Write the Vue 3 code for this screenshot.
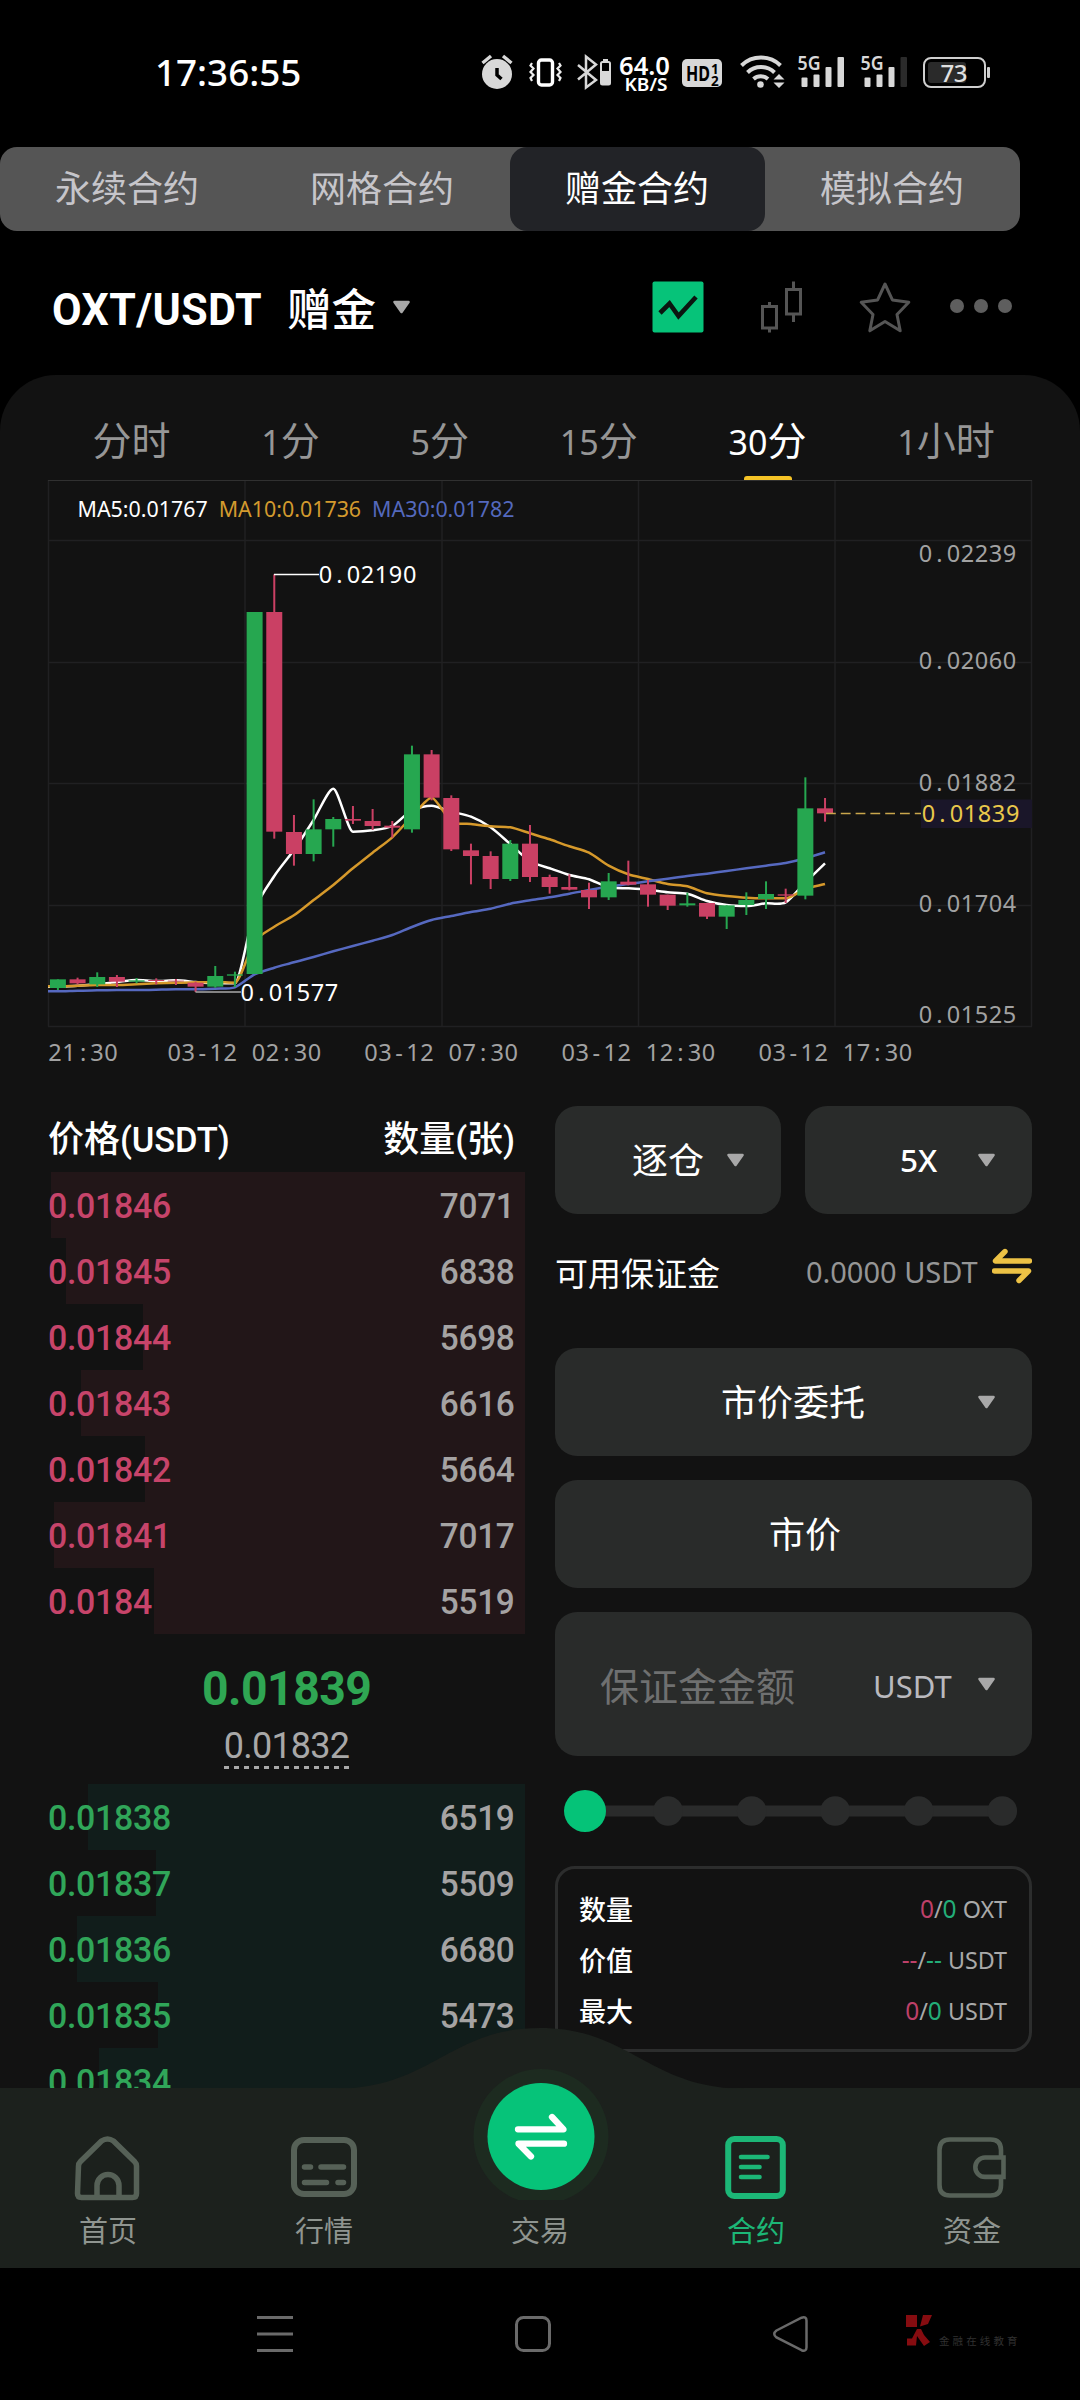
<script setup>
const segments = ['永续合约', '网格合约', '赠金合约', '模拟合约']
const periods = [
  { num: '', unit: '分时' },
  { num: '1', unit: '分' },
  { num: '5', unit: '分' },
  { num: '15', unit: '分' },
  { num: '30', unit: '分', active: true },
  { num: '1', unit: '小时' },
]

// Chart geometry: the svg starts at page y = 480; series are stored in thirds of a pixel from y = 720.
const toY = (v) => 240 + v / 3
const toX = (i) => 57.9 + 19.67 * i

// [up, bodyTop, bodyBottom, wickTop, wickBottom]
const raw = [
  [1, 778, 804, 778, 810], [0, 778, 790, 773, 793], [1, 771, 793, 757, 801], [0, 771, 785, 765, 801],
  [1, 781, 785, 774, 790], [0, 780, 783, 775, 793], [0, 782, 784, 777, 795], [0, 788, 800, 785, 816],
  [1, 768, 800, 738, 803], [1, 763, 767, 755, 801], [1, -324, 762, -324, 762], [0, -324, 335, -437, 356],
  [0, 336, 402, 285, 437], [1, 328, 402, 238, 424], [1, 297, 328, 291, 380], [0, 297, 302, 258, 312],
  [0, 303, 318, 267, 330], [0, 317, 323, 303, 353], [1, 103, 328, 77, 338], [0, 103, 233, 90, 241],
  [0, 234, 388, 226, 393], [0, 391, 408, 371, 493], [0, 408, 477, 394, 507], [1, 371, 477, 360, 483],
  [0, 371, 471, 315, 486], [0, 471, 501, 464, 521], [0, 501, 509, 463, 511], [0, 510, 532, 488, 567],
  [1, 484, 532, 459, 540], [0, 485, 494, 422, 496], [0, 493, 524, 480, 560], [0, 524, 557, 524, 570],
  [1, 550, 556, 518, 560], [0, 549, 590, 549, 597], [1, 556, 590, 556, 627], [1, 540, 555, 517, 585],
  [1, 522, 537, 484, 567], [0, 523, 527, 506, 549], [1, 265, 527, 172, 538], [0, 265, 280, 234, 305],
]
const candles = raw.map(([up, t, b, wt, wb], i) => ({
  x: toX(i), y: toY(t), h: (b - t) / 3, w1: toY(wt), w2: toY(wb), color: up ? '#26a750' : '#ca4064',
}))

const ma5 = [800, 797, 793, 786, 780, 783, 781, 786, 790, 790, 570, 468, 390, 300, 206, 335, 331, 318, 270, 257,
  275, 290, 322, 372, 424, 445, 465, 478, 502, 505, 509, 517, 521, 543, 555, 558, 550, 547, 487, 430]
const ma10 = [799, 797, 795, 795, 793, 790, 788, 787, 786, 788, 665, 620, 586, 540, 495, 445, 398, 352, 290, 233,
  305, 312, 319, 322, 340, 358, 379, 398, 437, 463, 477, 492, 499, 520, 528, 533, 535, 535, 507, 492]
const ma30 = [814, 812, 811, 810, 810, 809, 808, 808, 806, 802, 763, 743, 727, 711, 694, 678, 662, 645, 621, 600,
  588, 576, 566, 551, 541, 532, 521, 510, 500, 492, 484, 476, 468, 461, 453, 445, 437, 429, 415, 397]

function smooth(values) {
  const p = [[48, toY(values[0])], ...values.map((v, i) => [toX(i), toY(v)])]
  const slope = p.map((_, i) => {
    if (i === 0 || i === p.length - 1) return null
    const a = (p[i][1] - p[i - 1][1]) / (p[i][0] - p[i - 1][0])
    const b = (p[i + 1][1] - p[i][1]) / (p[i + 1][0] - p[i][0])
    return a * b <= 0 ? 0 : (a + b) / 2
  })
  let d = `M${p[0][0]} ${p[0][1]}`
  for (let i = 1; i < p.length; i++) {
    const [x0, y0] = p[i - 1]
    const [x1, y1] = p[i]
    const lin = (y1 - y0) / (x1 - x0)
    const k = (x1 - x0) * 0.25
    const m0 = slope[i - 1] ?? lin
    const m1 = slope[i] ?? lin
    d += `C${(x0 + k).toFixed(1)} ${(y0 + k * m0).toFixed(1)} ${(x1 - k).toFixed(1)} ${(y1 - k * m1).toFixed(1)} ${x1.toFixed(1)} ${y1.toFixed(1)}`
  }
  return d
}
const lines = [
  { d: smooth(ma5), color: '#ffffff' },
  { d: smooth(ma10), color: '#d6992b' },
  { d: smooth(ma30), color: '#5669c0' },
]

// Fixed-pitch labels: every character is centred in its own 14px cell.
const cells = (text, x) => [...text].map((_, i) => (x + i * 14.03).toFixed(1)).join(' ')
const labels = [
  { t: '0.02239', x: 925.4, y: 82, c: '#a2a2a2' },
  { t: '0.02060', x: 925.4, y: 189.3, c: '#a2a2a2' },
  { t: '0.01882', x: 925.4, y: 311, c: '#a2a2a2' },
  { t: '0.01704', x: 925.4, y: 431.7, c: '#a2a2a2' },
  { t: '0.01525', x: 925.4, y: 543, c: '#a2a2a2' },
  { t: '0.01839', x: 928.5, y: 342, c: '#e9c84b' },
  { t: '0.02190', x: 325.5, y: 103, c: '#ffffff' },
  { t: '0.01577', x: 247.3, y: 521, c: '#ffffff' },
  { t: '21:30', x: 55, y: 580.7, c: '#a2a2a2' },
  { t: '03-12 02:30', x: 174.2, y: 580.7, c: '#a2a2a2' },
  { t: '03-12 07:30', x: 371, y: 580.7, c: '#a2a2a2' },
  { t: '03-12 12:30', x: 568.2, y: 580.7, c: '#a2a2a2' },
  { t: '03-12 17:30', x: 765.2, y: 580.7, c: '#a2a2a2' },
]
const gridX = [48.5, 245, 442, 638.5, 835, 1031.5]
const gridY = [60.5, 182.5, 303.5, 425.5, 546.5]

const asks = [
  ['0.01846', '7071', 474], ['0.01845', '6838', 459], ['0.01844', '5698', 382], ['0.01843', '6616', 444],
  ['0.01842', '5664', 380], ['0.01841', '7017', 471], ['0.0184', '5519', 371],
]
const bids = [
  ['0.01838', '6519', 437], ['0.01837', '5509', 369], ['0.01836', '6680', 448], ['0.01835', '5473', 367],
  ['0.01834', '', 426],
]
const stops = [668, 751.7, 835.2, 918.7, 1002.3]
const summary = [
  { name: '数量', a: '0', b: '0', unit: 'OXT' },
  { name: '价值', a: '--', b: '--', unit: 'USDT' },
  { name: '最大', a: '0', b: '0', unit: 'USDT' },
]
</script>

<template>
  <div class="screen">
    <header class="status">
      <span class="clock">17:36:55</span>
      <svg class="status-icons" width="520" height="60" viewBox="476 44 520 60">
        <g fill="#d8d8d8">
          <circle cx="497" cy="74" r="15" />
          <path d="M482.500 63l8.500-7M511.500 63l-8.500-7" stroke="#d8d8d8" stroke-width="3.400" />
          <path d="M497 68v7l4.500 4" stroke="#000" stroke-width="3.500" fill="none" />
        </g>
        <rect x="538.500" y="60" width="14" height="25" rx="3" fill="none" stroke="#fff" stroke-width="3.400" />
        <path d="M532 63l-1.500 2.500 3 3-3 3.500 3 3-3 3 1.500 3M559 63l1.500 2.500-3 3 3 3.500-3 3 3 3-1.500 3" fill="none" stroke="#eee" stroke-width="2.200" />
        <path d="M578 65l18 15-10 7.500v-31l10 8-18 15" fill="none" stroke="#d8d8d8" stroke-width="2.500" />
        <path d="M603 59h5v2h-5z" fill="#d8d8d8" />
        <rect x="601" y="62" width="9" height="22.500" rx="1.500" fill="none" stroke="#d8d8d8" stroke-width="2" />
        <rect x="601" y="71" width="9" height="13" fill="#d8d8d8" />
        <text x="619" y="74.500" font-size="24.500" font-weight="600" fill="#fff" textLength="51" lengthAdjust="spacingAndGlyphs">64.0</text>
        <text x="624.500" y="91" font-size="18" font-weight="600" fill="#fff" textLength="43" lengthAdjust="spacingAndGlyphs">KB/S</text>
        <rect x="682" y="59" width="40" height="28" rx="5" fill="#d8d8d8" />
        <text x="686" y="81" font-size="22" font-weight="700" fill="#000" textLength="24" lengthAdjust="spacingAndGlyphs">HD</text>
        <text x="711" y="73.500" font-size="13.500" font-weight="700" fill="#000">1</text>
        <text x="711" y="85.500" font-size="13.500" font-weight="700" fill="#000">2</text>
        <g fill="none" stroke="#d8d8d8" stroke-width="4">
          <path d="M741.500 65.500a28 28 0 0 1 39 0" />
          <path d="M747.500 72.500a19.500 19.500 0 0 1 27 0" />
          <path d="M753.500 79a11 11 0 0 1 14.500 0" />
        </g>
        <circle cx="760.500" cy="84.500" r="3.300" fill="#d8d8d8" />
        <path d="M773.500 79.500l5.500-5.500 5.500 5.500zM773.500 82.500l5.500 5.500 5.500-5.500z" fill="#d8d8d8" />
        <g v-for="(dx, n) in [0, 63]" :key="dx" :transform="`translate(${dx} 0)`" fill="#d8d8d8">
          <text x="797.500" y="70" font-size="19.500" font-weight="600" textLength="23" lengthAdjust="spacingAndGlyphs">5G</text>
          <rect x="801.500" y="77.500" width="6" height="9.500" rx="1" />
          <rect x="813.500" y="74.500" width="6" height="12.500" rx="1" />
          <rect x="825.500" y="67" width="6" height="20" rx="1" />
          <rect x="837.500" y="57" width="6.500" height="30" rx="1" :fill="n ? '#2b2b2b' : '#d8d8d8'" />
        </g>
        <rect x="924" y="58" width="61" height="29" rx="7" fill="none" stroke="#cfcfcf" stroke-width="2" />
        <rect x="928" y="62" width="38" height="21" rx="3" fill="#2a2a2a" />
        <rect x="987" y="67" width="3" height="11" rx="1" fill="#cfcfcf" />
        <text x="940.500" y="81.500" font-size="24" font-weight="500" fill="#e0e0e0" textLength="27">73</text>
      </svg>
    </header>

    <nav class="segments">
      <span v-for="(s, i) in segments" :key="s" :class="['segment', { on: i === 2 }]">{{ s }}</span>
    </nav>

    <div class="title-row">
      <span class="pair">OXT/USDT</span>
      <span class="gift">赠金</span>
      <svg class="caret" width="19" height="14" viewBox="0 0 19 14"><path d="M2.500 2h14L9.500 12z" /></svg>
      <svg class="tools" width="370" height="60" viewBox="648 277 370 60">
        <rect x="652.500" y="281.500" width="51" height="51" rx="2" fill="#06c379" />
        <path d="M660 313l9.500-9.500 9 12.500 17.500-19" fill="none" stroke="#0b1510" stroke-width="4.600" />
        <g fill="none" stroke="#555" stroke-width="3">
          <path d="M762.500 306.500h14v21.500h-14zM769.500 302v4M769.500 328v4.500M786.500 289.500h14v24.500h-14zM793.500 281.500v8M793.500 314v8" />
          <path d="M885 284l7.400 15.900 16.400 2.400-11.800 12.200 3.200 16.300-15.200-9.300-15.200 9.300 3.200-16.300-11.800-12.200 16.400-2.400z" stroke-linejoin="round" />
        </g>
        <g fill="#5e5e5e">
          <circle cx="957" cy="306" r="7" /><circle cx="981" cy="306" r="7" /><circle cx="1005" cy="306" r="7" />
        </g>
      </svg>
    </div>

    <main class="panel">
      <div class="periods">
        <span v-for="p in periods" :key="p.num + p.unit" :class="['period', { on: p.active }]"><i v-if="p.num">{{ p.num }}</i>{{ p.unit }}</span>
      </div>

      <div class="chart">
        <svg width="1080" height="600" viewBox="0 0 1080 600">
          <g stroke="#202022" stroke-width="1.500">
            <line v-for="x in gridX" :key="x" :x1="x" :x2="x" y1="0" y2="546.500" />
            <line v-for="y in gridY" :key="y" x1="48" x2="1032" :y1="y" :y2="y" />
          </g>
          <line x1="48" x2="1032" y1="0.500" y2="0.500" stroke="#303030" />
          <path v-for="l in lines" :key="l.color" :d="l.d" fill="none" :stroke="l.color" stroke-width="2.500" />
          <g v-for="c in candles" :key="c.x" :fill="c.color">
            <rect :x="c.x - 1" :y="c.w1" width="2" :height="c.w2 - c.w1" />
            <rect :x="c.x - 8" :y="c.y" width="16" :height="c.h" />
          </g>
          <line x1="274" x2="319" y1="94.500" y2="94.500" stroke="#fff" stroke-width="1.300" />
          <line x1="195.500" x2="241" y1="512" y2="512" stroke="#aaa" stroke-width="1.500" />
          <line x1="826" x2="922" y1="333.500" y2="333.500" stroke="#c9a64c" stroke-width="1.400" stroke-dasharray="9.800 5" />
          <rect x="921" y="319.500" width="111" height="28.500" fill="#1a1629" />
          <text v-for="l in labels" :key="l.t" class="mono" :x="cells(l.t, l.x)" :y="l.y" :fill="l.c">{{ l.t }}</text>
        </svg>
        <div class="legend">
          <span class="m5">MA5:0.01767</span><span class="m10">MA10:0.01736</span><span class="m30">MA30:0.01782</span>
        </div>
      </div>

      <div class="trade">
        <section class="book">
          <div class="book-head">
            <span>价格<b>(USDT)</b></span><span>数量<b>(</b>张<b>)</b></span>
          </div>
          <div v-for="r in asks" :key="r[0]" class="row ask">
            <span class="depth" :style="{ width: r[2] + 'px' }"></span>
            <span class="price">{{ r[0] }}</span><span class="qty">{{ r[1] }}</span>
          </div>
          <div class="mid">
            <span class="last">0.01839</span>
            <span class="mark">0.01832</span>
          </div>
          <div v-for="r in bids" :key="r[0]" class="row bid">
            <span class="depth" :style="{ width: r[2] + 'px' }"></span>
            <span class="price">{{ r[0] }}</span><span class="qty">{{ r[1] }}</span>
          </div>
        </section>

        <section class="order">
          <div class="pick-row">
            <div class="box mode"><span>逐仓</span><svg class="caret" width="19" height="14" viewBox="0 0 19 14"><path d="M2.500 2h14L9.500 12z" /></svg></div>
            <div class="box lever"><span class="x5">5X</span><svg class="caret" width="19" height="14" viewBox="0 0 19 14"><path d="M2.500 2h14L9.500 12z" /></svg></div>
          </div>
          <div class="margin-row">
            <span class="margin-name">可用保证金</span>
            <span class="margin-val">0.0000 USDT</span>
            <svg width="40" height="36" viewBox="0 0 40 36" fill="none" stroke="#edc245" stroke-width="5.400" stroke-linecap="round" stroke-linejoin="round">
              <path d="M13 3.500L3.500 13h34M27 32.500l9.500-9.500h-34" />
            </svg>
          </div>
          <div class="box type"><span>市价委托</span><svg class="caret" width="19" height="14" viewBox="0 0 19 14"><path d="M2.500 2h14L9.500 12z" /></svg></div>
          <div class="box market"><span>市价</span></div>
          <div class="box amount">
            <span class="hint">保证金金额</span><span class="unit">USDT</span>
            <svg class="caret" width="19" height="14" viewBox="0 0 19 14"><path d="M2.500 2h14L9.500 12z" /></svg>
          </div>
          <svg class="slider" width="477" height="50" viewBox="555 1786 477 50">
            <rect x="585" y="1805.500" width="417" height="11" fill="#2a2b2b" />
            <circle v-for="x in stops" :key="x" :cx="x" cy="1811" r="14.800" fill="#2a2b2b" />
            <circle cx="585" cy="1811" r="21" fill="#05c378" />
          </svg>
          <div class="summary">
            <div v-for="s in summary" :key="s.name" class="sum-row">
              <span class="sum-name">{{ s.name }}</span>
              <span class="sum-val"><em class="r">{{ s.a }}</em>/<em class="g">{{ s.b }}</em> {{ s.unit }}</span>
            </div>
          </div>
        </section>
      </div>
    </main>

    <footer class="tabbar">
      <svg class="hump" width="1080" height="180" viewBox="0 2020 1080 180">
        <path d="M335 2089C432 2088 450 2028 540 2028S648 2088 745 2089z" fill="#1c211d" />
        <circle cx="541" cy="2136.500" r="67.500" fill="#1d2b20" />
        <circle cx="541" cy="2136.500" r="53.500" fill="#06c379" />
        <path d="M518 2129.300h45.500L552 2117M564 2143.700h-45.500L531 2156.500" fill="none" stroke="#fff" stroke-width="6.300" stroke-linecap="round" stroke-linejoin="round" />
      </svg>
      <div class="tab">
        <svg width="72" height="68" viewBox="72 2134 72 68" fill="none" stroke="#566157" stroke-width="5.500" stroke-linejoin="round">
          <path d="M78.500 2166q0-2.500 2-4.500l21-20.500q6-4 12 0l21 20.500q2 2 2 4.500v27.500q0 4-4 4h-51q-4 0-4-4zM97 2197v-11.500a11 11 0 0 1 22 0v11.500" />
        </svg>
        <span>首页</span>
      </div>
      <div class="tab">
        <svg width="72" height="68" viewBox="289 2134 72 68" fill="none" stroke="#566157" stroke-width="6">
          <rect x="295" y="2140" width="60" height="54" rx="10" />
          <path d="M305.500 2167h6M322 2167h22.500M305.500 2182.500h22M339 2182.500h5.500" stroke-width="5.500" stroke-linecap="round" />
        </svg>
        <span>行情</span>
      </div>
      <div class="tab"><svg width="72" height="68"></svg><span>交易</span></div>
      <div class="tab on">
        <svg width="72" height="68" viewBox="720 2134 72 68" fill="none" stroke="#1cb777" stroke-width="6">
          <rect x="728.200" y="2139" width="54.600" height="57" rx="6" />
          <path d="M741 2157h26.500M741 2167h18.500M741 2177h18.500" stroke-width="4.600" stroke-linecap="round" />
        </svg>
        <span>合约</span>
      </div>
      <div class="tab">
        <svg width="72" height="68" viewBox="936 2134 72 68" fill="none" stroke="#566157" stroke-width="4.600">
          <path d="M1001 2157v-7q0-10.500-10.500-10.500h-40.500q-10.500 0-10.500 10.500v35q0 10.500 10.500 10.500h40.500q10.500 0 10.500-10.500v-7M1003.500 2157.500h-18.500a9.700 9.700 0 0 0 0 19.400h18.500z" />
        </svg>
        <span>资金</span>
      </div>
    </footer>

    <div class="sysbar">
      <svg width="1080" height="132" viewBox="0 2268 1080 132">
        <g fill="none" stroke="#6a6a6a" stroke-width="3">
          <path d="M257 2317.500h36M257 2334h36M257 2350.500h36" />
          <rect x="516.500" y="2317.500" width="33" height="33" rx="7" />
          <path d="M776.500 2330.500l25-12.800q5-1.700 5 3v26.500q0 4.700-5 3l-25-12.800q-4.500-3.500 0-6.900z" stroke-width="2.500" />
        </g>
        <path d="M906 2315h11v12h-11zM923 2315h9l-4 9-8 2.500zM917 2329h4l3 6 6 7-6 4-7-10-1 9.500h-9v-7h5z" fill="#860c10" />
        <text x="939" y="2344.500" class="stamp">金融在线教育</text>
      </svg>
    </div>
  </div>
</template>

<style>
body { background: #000; }
</style>

<style scoped>
.screen {
  width: 1080px; height: 2400px; overflow: hidden; background: #000; color: #fff;
  display: flex; flex-direction: column;
  font-family: "Noto Sans", "Noto Sans CJK SC", sans-serif;
}
.status { height: 147px; flex: none; display: flex; align-items: flex-start; }
.clock { margin-left: 155px; width: 321px; flex: none; font-size: 36.800px; font-weight: 500; line-height: 50px; margin-top: 47px; }
.status-icons { margin-top: 44px; }
.segments { width: 1020px; height: 84px; flex: none; display: flex; background: #555; border-radius: 17px; overflow: hidden; }
.segment { flex: 1; text-align: center; line-height: 84px; font-size: 36px; color: #c6c5ca; text-indent: -1px; }
.segment.on { background: #222327; color: #fff; border-radius: 17px; }
.title-row { height: 144px; flex: none; display: flex; align-items: flex-start; padding: 46px 0 0 52px; box-sizing: border-box; }
.pair { width: 236px; font: 700 44.500px/66px Roboto, sans-serif; letter-spacing: 0.400px; white-space: nowrap; transform: scaleX(0.965); transform-origin: 0 50%; }
.gift { font-size: 44.500px; line-height: 64px; font-weight: 500; width: 104px; margin-left: -1px; margin-right: 1px; }
.caret { flex: none; fill: #a8a8a8; stroke: #a8a8a8; stroke-width: 2.600; stroke-linejoin: round; }
.title-row .caret { margin-top: 23px; }
.tools { margin-left: 237px; }

.panel { height: 1713px; flex: none; background: #121212; border-radius: 56px 56px 0 0; overflow: hidden; }
.periods { display: flex; gap: 90.800px; height: 105px; padding-left: 92.500px; }
.period { font-size: 39px; line-height: 129px; color: #969696; position: relative; white-space: nowrap; height: 105px; }
.period i { font-style: normal; font-size: 34px; }
.period.on { color: #fff; }
.period.on::after { content: ''; position: absolute; left: 15px; bottom: 0; width: 48px; height: 4px; background: #f5c326; border-radius: 3px 3px 0 0; }
.chart { position: relative; height: 600px; }
.chart svg { display: block; }
.mono { font-size: 23.500px; text-anchor: middle; }
.legend { position: absolute; left: 77.500px; top: 14px; display: flex; gap: 11px; font-size: 21.400px; line-height: 30px; }
.m10 { color: #d39a2e; }
.m30 { color: #5469bd; }

.trade { display: flex; }
.book { width: 525px; flex: none; }
.book-head { height: 91.500px; box-sizing: border-box; padding: 27px 10px 0 48px; display: flex; justify-content: space-between; font-size: 36px; font-weight: 500; line-height: 63px; }
.book-head b { font: 500 34.500px/40px Roboto, sans-serif; letter-spacing: -0.100px; }
.row { height: 66px; position: relative; display: flex; justify-content: space-between; padding: 0 10px 0 48px; font: 500 35.500px/69px Roboto, sans-serif; letter-spacing: -0.300px; }
.depth { position: absolute; right: 0; top: 0; height: 66px; }
.ask .depth { background: #221618; }
.bid .depth { background: #111d1b; }
.price, .qty { position: relative; }
.price { transform: scaleX(0.955); transform-origin: 0 50%; }
.qty { transform: scaleX(0.94); transform-origin: 100% 50%; }
.ask .price { color: #c7446a; }
.bid .price { color: #30a659; }
.qty { color: #a5a3a3; }
.mid { height: 150px; padding-left: 48px; display: flex; flex-direction: column; align-items: center; font-family: Roboto, sans-serif; }
.last { margin-top: 25px; font-size: 49px; font-weight: 700; line-height: 60px; letter-spacing: -0.500px; color: #2fa653; transform: scaleX(0.945); }
.mark { margin-top: 2px; height: 48px; font-size: 36px; line-height: 51px; letter-spacing: -0.800px; color: #a8a8a8; background: repeating-linear-gradient(90deg, #a8a8a8 0 5px, transparent 5px 10px) 0 100% / 100% 3px no-repeat; }

.order { width: 477px; margin-left: 30px; }
.pick-row { display: flex; justify-content: space-between; padding-top: 25.500px; }
.box { box-sizing: border-box; background: #292b2a; border-radius: 22px; display: flex; align-items: center; font-size: 36px; height: 108px; }
.box span { position: relative; top: -1px; }
.mode { width: 226px; padding-left: 77px; }
.mode .caret { margin-left: 22px; }
.lever { width: 227px; padding-left: 95px; }
.box .x5 { font-size: 31.500px; font-weight: 500; width: 77px; top: 0; }
.margin-row { height: 134px; box-sizing: border-box; display: flex; align-items: center; padding-bottom: 18px; }
.margin-name { font-size: 33px; width: 251.500px; }
.margin-val { font-size: 29px; width: 186.500px; color: #959595; white-space: nowrap; }
.margin-row svg { flex: none; margin-top: -12px; }
.type { padding-left: 166px; }
.type .caret { margin-left: 112px; }
.market { margin-top: 24px; padding-left: 214px; }
.amount { margin-top: 24px; height: 144px; padding-left: 45px; }
.box .hint { font-size: 39px; color: #6f7070; width: 273px; top: 0; }
.box .unit { font-size: 31px; color: #b9b9be; width: 104px; top: 2px; }
.slider { display: block; margin-top: 30px; }
.summary { margin-top: 30px; height: 186px; box-sizing: border-box; border: 3px solid #2c2d2d; border-radius: 20px; padding: 15px 22px 0 21px; }
.sum-row { display: flex; justify-content: space-between; height: 51px; line-height: 51px; }
.sum-name { font-size: 27px; font-weight: 500; }
.sum-val { font-size: 23.300px; color: #a9a9a9; white-space: pre; }
.sum-val em { font-style: normal; font-size: 24.500px; line-height: 40px; }
.r { color: #bd4069; }
.g { color: #23ad78; }

.tabbar { position: relative; height: 180px; flex: none; background: #1c211d; display: flex; }
.hump { position: absolute; left: 0; top: -68px; }
.tab { position: relative; width: 216px; flex: none; display: flex; flex-direction: column; align-items: center; padding-top: 46px; box-sizing: border-box; font-size: 29px; line-height: 40px; color: #8f9590; }
.tab svg { flex: none; }
.tab span { margin-top: 9px; }
.tab.on { color: #1cb777; }
.sysbar { height: 132px; }
.sysbar svg { display: block; }
.stamp { font-size: 10.500px; letter-spacing: 3.100px; fill: #303030; }
</style>
